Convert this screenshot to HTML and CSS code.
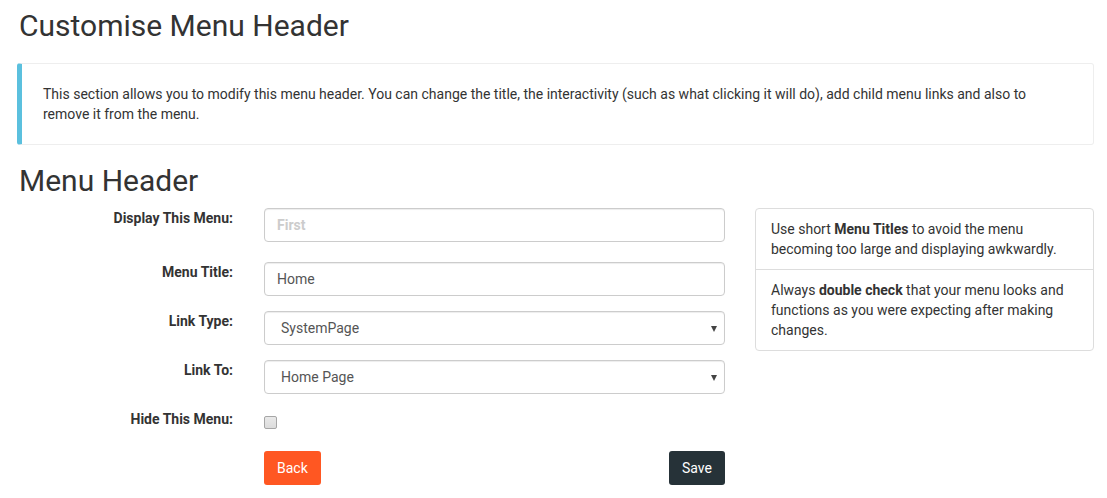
FILE: index.html
```html
<!DOCTYPE html>
<html lang="en">
<head>
<meta charset="utf-8">
<title>Customise Menu Header</title>
<link rel="stylesheet" href="styles.css">
</head>
<body>
<div class="page">
  <h1 class="page-title">Customise Menu Header</h1>
  <div class="callout">
    <p>This section allows you to modify this menu header. You can change the title, the interactivity (such as what clicking it will do), add child menu links and also to remove it from the menu.</p>
  </div>
  <h2 class="section-title">Menu Header</h2>
  <div class="layout">
    <form class="form">
      <div class="row row-first">
        <label class="label">Display This Menu:</label>
        <input class="control control-disabled" type="text" value="First" disabled>
      </div>
      <div class="row">
        <label class="label">Menu Title:</label>
        <input class="control" type="text" value="Home">
      </div>
      <div class="row">
        <label class="label">Link Type:</label>
        <div class="select-wrap">
          <select class="control select"><option>SystemPage</option></select>
        </div>
      </div>
      <div class="row">
        <label class="label">Link To:</label>
        <div class="select-wrap">
          <select class="control select"><option>Home Page</option></select>
        </div>
      </div>
      <div class="row row-check">
        <label class="label">Hide This Menu:</label>
        <div class="check-cell"><input class="check" type="checkbox"></div>
      </div>
      <div class="row row-actions">
        <span></span>
        <div class="actions">
          <button type="button" class="btn btn-back">Back</button>
          <button type="button" class="btn btn-save">Save</button>
        </div>
      </div>
    </form>
    <ul class="tips">
      <li class="tip">Use short <b>Menu Titles</b> to avoid the menu becoming too large and displaying awkwardly.</li>
      <li class="tip">Always <b>double check</b> that your menu looks and functions as you were expecting after making changes.</li>
    </ul>
  </div>
</div>
</body>
</html>
```

FILE: styles.css
```css
* { box-sizing: border-box; }
html, body { margin: 0; padding: 0; background: #fff; }
body {
  font-family: Roboto, "Noto Sans", "Liberation Sans", sans-serif;
  font-size: 14px;
  line-height: 20px;
  color: #333;
}
.page { padding: 0 13px 0 17px; }
.page-title {
  font-size: 30px;
  font-weight: 400;
  line-height: 36px;
  margin: 0;
  padding: 8px 0 0 2px;
  height: 63px;
  color: #333;
}
.callout {
  border: 1px solid #eee;
  border-left: 5px solid #5bc0de;
  border-radius: 3px;
  padding: 20px 20px 20px 21px;
}
.callout p { margin: 0; }
.section-title {
  font-size: 30px;
  font-weight: 400;
  line-height: 36px;
  margin: 0;
  padding: 18px 0 0 2px;
  height: 63px;
  color: #333;
}
.layout {
  display: grid;
  grid-template-columns: 708px 339px;
  column-gap: 30px;
  align-items: start;
}
.form { margin: 0; }
.row {
  display: grid;
  grid-template-columns: 216px 461px;
  column-gap: 31px;
  align-items: start;
  margin-bottom: 15px;
}
.row-first { margin-bottom: 20px; }
.label {
  text-align: right;
  font-weight: 700;
  line-height: 20px;
  padding-top: 0;
}
.control {
  display: block;
  width: 100%;
  height: 34px;
  padding: 6px 12px;
  font-family: inherit;
  font-size: 14px;
  line-height: 20px;
  color: #555;
  background: #fff;
  border: 1px solid #ccc;
  border-radius: 4px;
  box-shadow: inset 0 1px 1px rgba(0,0,0,.075);
  margin: 0;
}
.control-disabled {
  color: #ccc;
  font-weight: 700;
  -webkit-text-fill-color: #ccc;
  opacity: 1;
}
.select-wrap { position: relative; }
.select {
  -webkit-appearance: none;
  appearance: none;
  padding-left: 16px;
}
.select-wrap::after {
  content: "";
  position: absolute;
  right: 8px;
  top: 15px;
  border-left: 3.5px solid transparent;
  border-right: 3.5px solid transparent;
  border-top: 6px solid #444;
  pointer-events: none;
}
.row-check { min-height: 27px; margin-bottom: 15px; }
.check-cell { padding-top: 7px; height: 27px; }
.check {
  -webkit-appearance: none;
  appearance: none;
  display: block;
  width: 13px;
  height: 13px;
  margin: 0;
  border: 1px solid #a6a6a6;
  border-radius: 2px;
  background: linear-gradient(#e9e9e9, #dcdcdc);
}
.row-actions { margin-bottom: 0; }
.actions {
  display: flex;
  justify-content: space-between;
}
.btn {
  font-family: inherit;
  font-size: 14px;
  line-height: 20px;
  padding: 7px 13px;
  height: 34px;
  border: 0;
  border-radius: 3px;
  color: #fff;
}
.btn-back { background: #ff5722; }
.btn-save { background: #263238; }
.tips {
  list-style: none;
  margin: 0;
  padding: 0;
  border: 1px solid #ddd;
  border-radius: 4px;
}
.tip { padding: 10px 15px; }
.tip + .tip { border-top: 1px solid #ddd; }
.tip b { font-weight: 700; }
```
